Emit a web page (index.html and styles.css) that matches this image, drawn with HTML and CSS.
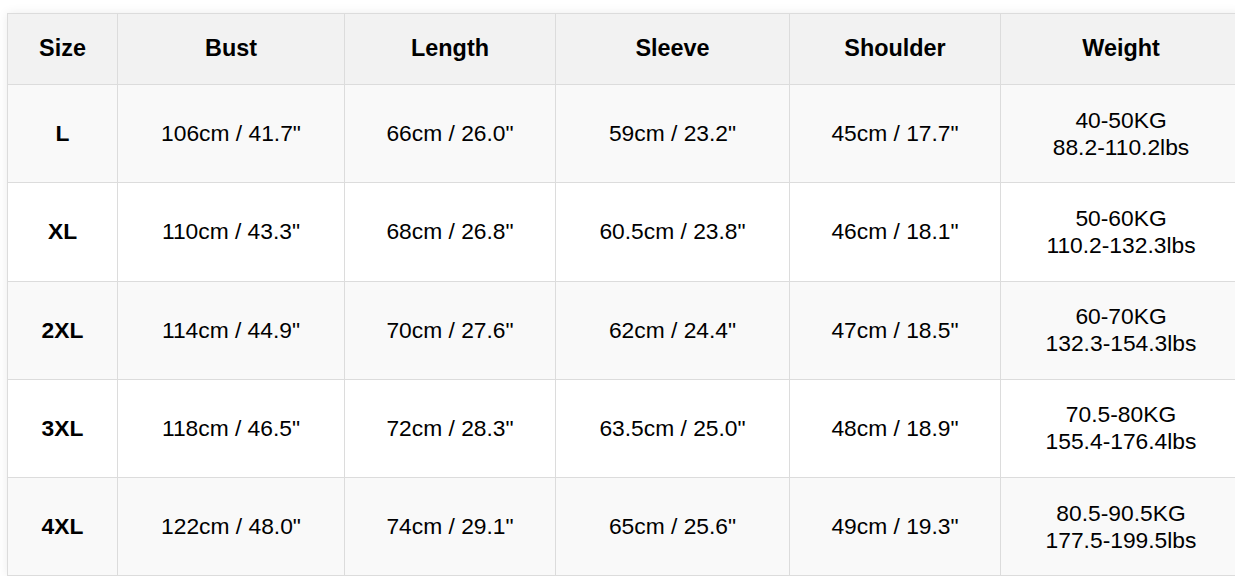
FILE: index.html
```html
<!DOCTYPE html>
<html>
<head>
<meta charset="utf-8">
<link rel="stylesheet" href="styles.css">
</head>
<body>
<div class="wrap">
<table class="size-table">
<colgroup>
<col class="c1"><col class="c2"><col class="c3"><col class="c4"><col class="c5"><col class="c6">
</colgroup>
<thead>
<tr><th>Size</th><th>Bust</th><th>Length</th><th>Sleeve</th><th>Shoulder</th><th>Weight</th></tr>
</thead>
<tbody>
<tr><td class="sz">L</td><td>106cm / 41.7"</td><td>66cm / 26.0"</td><td>59cm / 23.2"</td><td>45cm / 17.7"</td><td>40-50KG<br>88.2-110.2lbs</td></tr>
<tr><td class="sz">XL</td><td>110cm / 43.3"</td><td>68cm / 26.8"</td><td>60.5cm / 23.8"</td><td>46cm / 18.1"</td><td>50-60KG<br>110.2-132.3lbs</td></tr>
<tr><td class="sz">2XL</td><td>114cm / 44.9"</td><td>70cm / 27.6"</td><td>62cm / 24.4"</td><td>47cm / 18.5"</td><td>60-70KG<br>132.3-154.3lbs</td></tr>
<tr><td class="sz">3XL</td><td>118cm / 46.5"</td><td>72cm / 28.3"</td><td>63.5cm / 25.0"</td><td>48cm / 18.9"</td><td>70.5-80KG<br>155.4-176.4lbs</td></tr>
<tr><td class="sz">4XL</td><td>122cm / 48.0"</td><td>74cm / 29.1"</td><td>65cm / 25.6"</td><td>49cm / 19.3"</td><td>80.5-90.5KG<br>177.5-199.5lbs</td></tr>
</tbody>
</table>
</div>
</body>
</html>
```

FILE: styles.css
```css
html, body {
  margin: 0;
  padding: 0;
  background: #fff;
  overflow: hidden;
}
.wrap {
  padding: 13px 0 0 7px;
  width: 1240px;
}
.size-table {
  border-collapse: collapse;
  table-layout: fixed;
  width: 1234px;
  font-family: "Liberation Sans", Arial, sans-serif;
  font-size: 22.8px;
  line-height: 27px;
  color: #000;
  box-shadow: 0 0 10px rgba(0,0,0,0.08);
}
.c1 { width: 110px; }
.c2 { width: 227px; }
.c3 { width: 211px; }
.c4 { width: 234px; }
.c5 { width: 211px; }
.c6 { width: 241px; }
.size-table th,
.size-table td {
  border: 1px solid #dcdcdc;
  text-align: center;
  vertical-align: middle;
  padding: 0;
}
.size-table th {
  height: 68px;
  background: #f2f2f2;
  font-weight: bold;
  font-size: 23.4px;
  padding-bottom: 2px;
}
.size-table td {
  height: 97.25px;
}
.size-table tbody tr:nth-child(odd) td {
  background: #f9f9f9;
}
.size-table tbody tr:nth-child(even) td {
  background: #fff;
}
.size-table td.sz {
  font-weight: bold;
}
```
